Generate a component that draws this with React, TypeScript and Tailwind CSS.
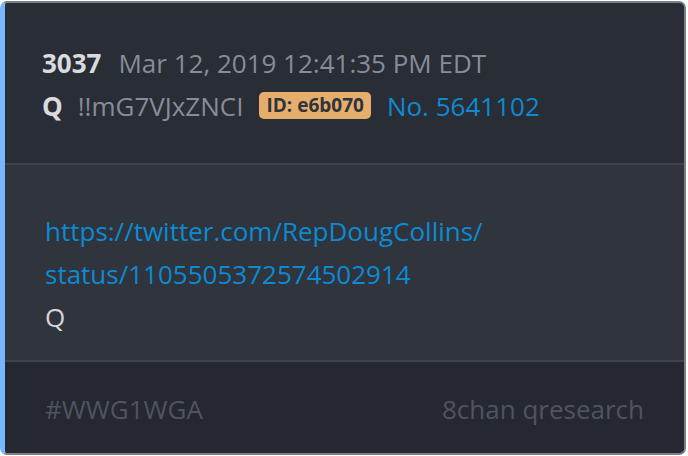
export default function App() {
  return (
    <div className="w-[688px] h-[456px] bg-white pt-px" style={{ fontFamily: '"Open Sans", "Noto Sans", sans-serif' }}>
      <div className="w-[686px] h-[454px] flex flex-col overflow-hidden rounded-[7px] border-2 border-l-[5px] border-[#7b7f88] border-l-[#78b7ff] bg-[#252830]">
        <header className="h-[160px] shrink-0 flex flex-col justify-center gap-[1px] bg-[#292d35] pl-[37px] pt-[2px] text-[26px] leading-[42px]">
          <div className="flex items-baseline gap-[17px]">
            <span className="font-bold text-[#d9dbde]">3037</span>
            <span className="text-[#878c98]">Mar 12, 2019 12:41:35 PM EDT</span>
          </div>
          <div className="flex items-center">
            <span className="font-bold text-[#d9dbde]">Q</span>
            <span className="ml-[15px] text-[#878c98]">!!mG7VJxZNCI</span>
            <span className="ml-[16px] rounded-[5px] bg-[#e6ae6c] px-[7px] text-[19px] leading-[27px] font-bold text-[#2f343c]">ID: e6b070</span>
            <span className="ml-[16px] text-[#0d8ad2]">No. 5641102</span>
          </div>
        </header>
        <div className="h-[2px] shrink-0 bg-[#3e434c]" />
        <main className="h-[195px] shrink-0 bg-[#2f343d] pl-[40px] pt-[45px] text-[26px] leading-[43px]">
          <a className="block text-[#0d8ad2]">https://twitter.com/RepDougCollins/</a>
          <a className="block text-[#0d8ad2]">status/1105505372574502914</a>
          <p className="text-[#d3d5d8]">Q</p>
        </main>
        <div className="h-[2px] shrink-0 bg-[#3e434c]" />
        <footer className="flex-1 flex items-center justify-between bg-[#252830] pl-[40px] pr-[40px] pt-[3px] text-[26px] text-[#4e5460]">
          <span>#WWG1WGA</span>
          <span>8chan qresearch</span>
        </footer>
      </div>
    </div>
  );
}
